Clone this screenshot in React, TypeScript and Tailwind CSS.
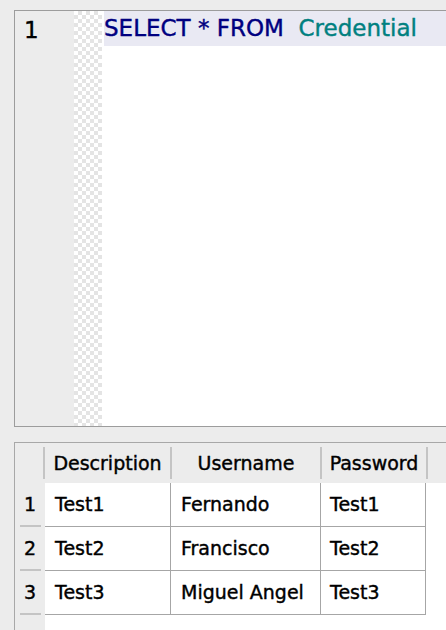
const rows = [
  { n: 1, d: 'Test1', u: 'Fernando', p: 'Test1' },
  { n: 2, d: 'Test2', u: 'Francisco', p: 'Test2' },
  { n: 3, d: 'Test3', u: 'Miguel Angel', p: 'Test3' },
]

function Editor() {
  return (
    <div className="h-[417px] w-[450px] shrink-0 flex border-l border-t border-b border-[#9c9c9c] bg-white">
      <div className="w-[59px] bg-[#ececec] pl-[9px] pt-[5px] text-[23px] leading-[28px] text-black">1</div>
      <div className="w-[28px] bg-[repeating-conic-gradient(#e4e4e4_0_25%,#ffffff_0_50%)] bg-[length:8px_8px]" />
      <div className="flex-1 pl-[2px]">
        <div className="h-[35px] bg-[#e9e9f3] flex items-center whitespace-pre text-[23px] leading-none">
          <span className="text-[#000080]">SELECT * FROM  </span>
          <span className="text-[#008080]">Credential</span>
        </div>
      </div>
    </div>
  )
}

function Results() {
  return (
    <div className="mt-[15px] flex-1 w-[450px] border-l border-t border-[#a8a8a8] bg-white flex text-[19px] text-black">
      <div className="w-[31px] bg-[#ececec] flex flex-col">
        <div className="h-[40px] flex items-center justify-end">
          <div className="w-[2px] h-[32px] bg-[#c4c4c4]" />
        </div>
        {rows.map((r) => (
          <div key={r.n} className="h-[44px] flex flex-col">
            <div className="flex-1 flex items-center pl-[9px]">{r.n}</div>
            <div className="ml-[5px] w-[21px] h-[2px] bg-[#c4c4c4]" />
          </div>
        ))}
      </div>
      <div className="flex flex-col">
        <div className="h-[40px] bg-[#ececec] flex items-center w-[419px]">
          <div className="w-[125px] text-center">Description</div>
          <div className="w-[2px] h-[32px] bg-[#c4c4c4]" />
          <div className="w-[148px] text-center">Username</div>
          <div className="w-[2px] h-[32px] bg-[#c4c4c4]" />
          <div className="w-[104px] text-center">Password</div>
          <div className="w-[2px] h-[32px] bg-[#c4c4c4]" />
        </div>
        {rows.map((r) => (
          <div key={r.n} className="h-[44px] flex border-b border-[#a6a6a6] w-[381px]">
            <div className="w-[126px] pl-[10px] flex items-center border-r border-[#a6a6a6]">{r.d}</div>
            <div className="w-[150px] pl-[10px] flex items-center border-r border-[#a6a6a6]">{r.u}</div>
            <div className="w-[105px] pl-[9px] flex items-center border-r border-[#a6a6a6]">{r.p}</div>
          </div>
        ))}
      </div>
    </div>
  )
}

export default function App() {
  return (
    <div className="w-[446px] h-[630px] overflow-hidden bg-[#ececec] pl-[14px] pt-[10px] flex flex-col font-['DejaVu_Sans',sans-serif] [-webkit-text-stroke:0.4px]">
      <Editor />
      <Results />
    </div>
  )
}
